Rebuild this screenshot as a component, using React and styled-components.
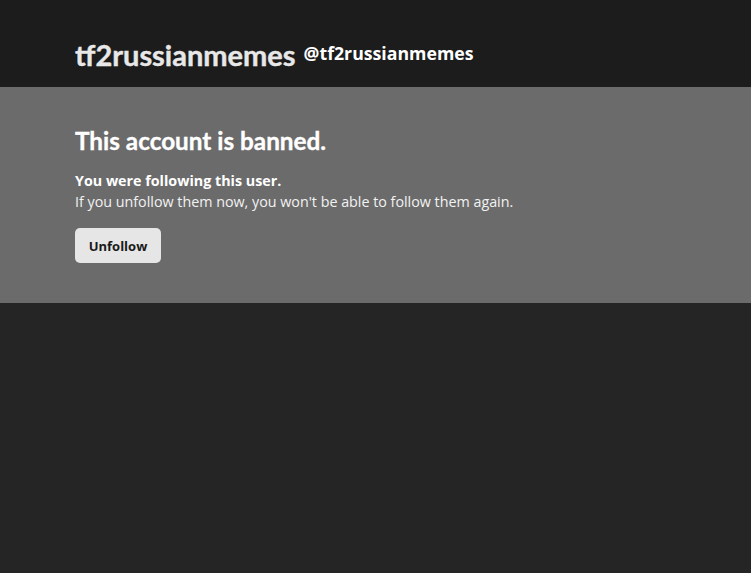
import React from "react";
import styled, { createGlobalStyle } from "styled-components";

const Global = createGlobalStyle`
  html, body {
    margin: 0;
    padding: 0;
    background: #252525;
  }
  body {
    font-family: "Open Sans", "Liberation Sans", sans-serif;
    color: #fff;
  }
`;

const Page = styled.div`
  min-height: 573px;
  background: #252525;
`;

const Header = styled.header`
  height: 87px;
  background: #1c1c1c;
  padding: 22px 75px 0;
  display: flex;
  align-items: center;
  gap: 8px;
  box-sizing: border-box;
`;

const Name = styled.h1`
  margin: 0;
  font-family: "Lato", sans-serif;
  font-weight: 700;
  font-size: 29px;
  color: #e8e8e8;
  -webkit-text-stroke: 0.4px #e8e8e8;
`;

const Handle = styled.span`
  font-family: "Open Sans", sans-serif;
  font-weight: 700;
  font-size: 17.7px;
  color: #fff;
  margin-bottom: 4px;
`;

const Banner = styled.section`
  background: #6b6b6b;
  height: 216px;
  box-sizing: border-box;
  padding: 39px 75px 0;
`;

const Title = styled.h2`
  margin: 0 0 15px;
  font-family: "Lato", sans-serif;
  font-weight: 700;
  font-size: 24.3px;
  color: #fff;
  -webkit-text-stroke: 0.35px #fff;
`;

const Strong = styled.p`
  margin: 0;
  font-weight: 700;
  font-size: 14.3px;
  line-height: 21px;
`;

const Text = styled.p`
  margin: 0;
  font-size: 14.3px;
  line-height: 21px;
  color: #f2f2f2;
`;

const Button = styled.button`
  margin-top: 16px;
  width: 86px;
  height: 35px;
  border: none;
  border-radius: 5px;
  background: #e6e6e6;
  color: #1a1a1a;
  font-family: "Open Sans", sans-serif;
  font-weight: 700;
  font-size: 13px;
  cursor: pointer;
`;

export default function App() {
  return (
    <Page>
      <Global />
      <Header>
        <Name>tf2russianmemes</Name>
        <Handle>@tf2russianmemes</Handle>
      </Header>
      <Banner>
        <Title>This account is banned.</Title>
        <Strong>You were following this user.</Strong>
        <Text>If you unfollow them now, you won't be able to follow them again.</Text>
        <Button>Unfollow</Button>
      </Banner>
    </Page>
  );
}
